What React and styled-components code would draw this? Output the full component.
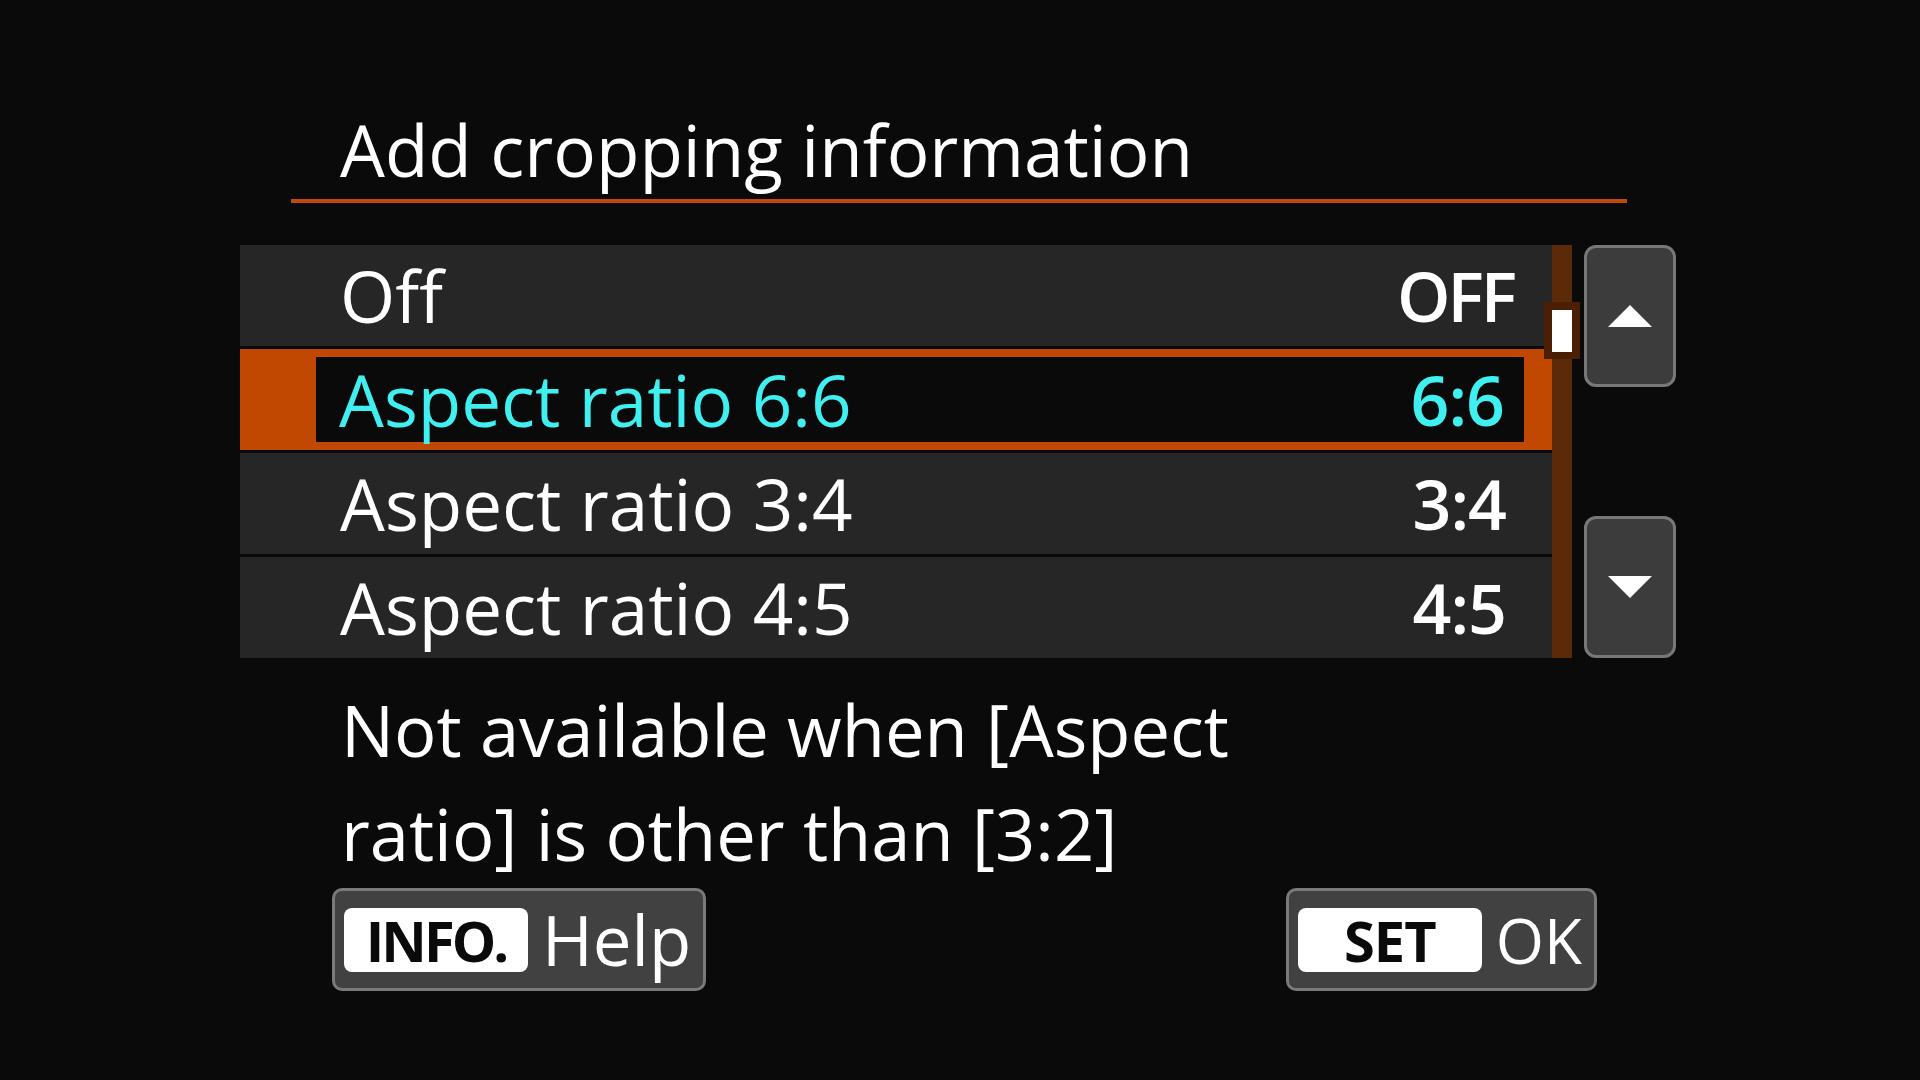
import styled, { createGlobalStyle } from "styled-components";

const GlobalStyle = createGlobalStyle`
  html, body {
    margin: 0;
    padding: 0;
    background: #0a0a0a;
  }
  body {
    font-family: "Open Sans", "Noto Sans", sans-serif;
    color: #ffffff;
  }
`;

const Screen = styled.div`
  width: 1920px;
  height: 1080px;
  box-sizing: border-box;
  padding-top: 105px;
  background: #0a0a0a;
  display: flex;
  flex-direction: column;
  overflow: hidden;
`;

const Header = styled.div`
  margin-left: 291px;
  width: 1336px;
  padding: 0 0 4px 49px;
  box-sizing: border-box;
  border-bottom: 4px solid #c2490a;
`;

const Title = styled.h1`
  margin: 0;
  font-size: 71px;
  font-weight: 400;
  line-height: 90px;
  white-space: nowrap;
`;

const MenuArea = styled.div`
  margin-top: 42px;
  margin-left: 240px;
  display: flex;
  align-items: stretch;
  gap: 12px;
`;

const ListWrap = styled.div`
  display: flex;
`;

const List = styled.ul`
  list-style: none;
  margin: 0;
  padding: 0;
  width: 1312px;
  display: flex;
  flex-direction: column;
  gap: 3px;
`;

const Row = styled.li`
  height: 101px;
  box-sizing: border-box;
  display: flex;
  background: ${(p) => (p.$selected ? "#c04800" : "#262626")};
  padding: ${(p) => (p.$selected ? "8px 28px 8px 76px" : "0")};
`;

const Cell = styled.div`
  flex: 1;
  display: flex;
  align-items: center;
  justify-content: space-between;
  background: ${(p) => (p.$selected ? "#0a0a0a" : "transparent")};
  padding: ${(p) => (p.$selected ? "0 20px 0 23px" : `0 ${p.$right}px 0 100px`)};
  color: ${(p) => (p.$selected ? "#40f0f0" : "#ffffff")};
  font-size: 71px;
  line-height: 1;
  white-space: nowrap;
`;

const Value = styled.span`
  font-weight: 600;
  font-size: 68px;
  letter-spacing: ${(p) => p.$tight}px;
`;

const Track = styled.div`
  position: relative;
  width: 20px;
  background: #5c2a08;
`;

const Thumb = styled.div`
  position: absolute;
  left: -8px;
  top: 57px;
  width: 36px;
  height: 57px;
  box-sizing: border-box;
  padding: 8px 8px 7px;
  background: #4a1f04;

  &::after {
    content: "";
    display: block;
    width: 100%;
    height: 100%;
    background: #ffffff;
  }
`;

const ArrowColumn = styled.div`
  display: flex;
  flex-direction: column;
  justify-content: space-between;
`;

const ArrowButton = styled.div`
  width: 92px;
  height: 142px;
  box-sizing: border-box;
  border: 3px solid #787878;
  border-radius: 12px;
  background: #3c3c3c;
  display: flex;
  align-items: center;
  justify-content: center;
`;

const HelpText = styled.p`
  margin: 20px 0 0 341px;
  font-size: 70.5px;
  line-height: 104px;
  white-space: nowrap;
`;

const Footer = styled.div`
  margin-left: 332px;
  width: 1265px;
  margin-top: 2px;
  display: flex;
  justify-content: space-between;
`;

const KeyButton = styled.div`
  height: 103px;
  box-sizing: border-box;
  border: 3px solid #7a7a7a;
  border-radius: 10px;
  background: #414141;
  display: flex;
  align-items: center;
  gap: 14px;
  padding: 0 ${(p) => p.$padRight}px 0 9px;
`;

const KeyCap = styled.span`
  width: 184px;
  height: 64px;
  border-radius: 8px;
  background: #ffffff;
  color: #0a0a0a;
  display: flex;
  align-items: center;
  justify-content: center;
  font-size: 56px;
  font-weight: 700;
  letter-spacing: ${(p) => p.$tight}px;
`;

const KeyLabel = styled.span`
  font-size: ${(p) => p.$size}px;
  line-height: 1;
`;

const items = [
  { label: "Off", value: "OFF", right: 38, tight: -3 },
  { label: "Aspect ratio 6:6", value: "6:6", selected: true },
  { label: "Aspect ratio 3:4", value: "3:4", right: 46, tight: -1 },
  { label: "Aspect ratio 4:5", value: "4:5", right: 46, tight: -1 },
];

function Arrow({ down }) {
  return (
    <svg width="44" height="22" viewBox="0 0 44 22">
      <polygon
        points={down ? "0,0 44,0 22,22" : "22,0 44,22 0,22"}
        fill="#ffffff"
      />
    </svg>
  );
}

export default function App() {
  return (
    <>
      <GlobalStyle />
      <Screen>
        <Header>
          <Title>Add cropping information</Title>
        </Header>

        <MenuArea>
          <ListWrap>
            <List>
              {items.map((item) => (
                <Row key={item.label} $selected={item.selected}>
                  <Cell $selected={item.selected} $right={item.right}>
                    <span>{item.label}</span>
                    <Value $tight={item.tight ?? -1}>{item.value}</Value>
                  </Cell>
                </Row>
              ))}
            </List>
            <Track>
              <Thumb />
            </Track>
          </ListWrap>
          <ArrowColumn>
            <ArrowButton>
              <Arrow />
            </ArrowButton>
            <ArrowButton>
              <Arrow down />
            </ArrowButton>
          </ArrowColumn>
        </MenuArea>

        <HelpText>
          Not available when [Aspect
          <br />
          ratio] is other than [3:2]
        </HelpText>

        <Footer>
          <KeyButton $padRight={12}>
            <KeyCap $tight={-3}>INFO.</KeyCap>
            <KeyLabel $size={69}>Help</KeyLabel>
          </KeyButton>
          <KeyButton $padRight={12}>
            <KeyCap $tight={-1}>SET</KeyCap>
            <KeyLabel $size={62}>OK</KeyLabel>
          </KeyButton>
        </Footer>
      </Screen>
    </>
  );
}
